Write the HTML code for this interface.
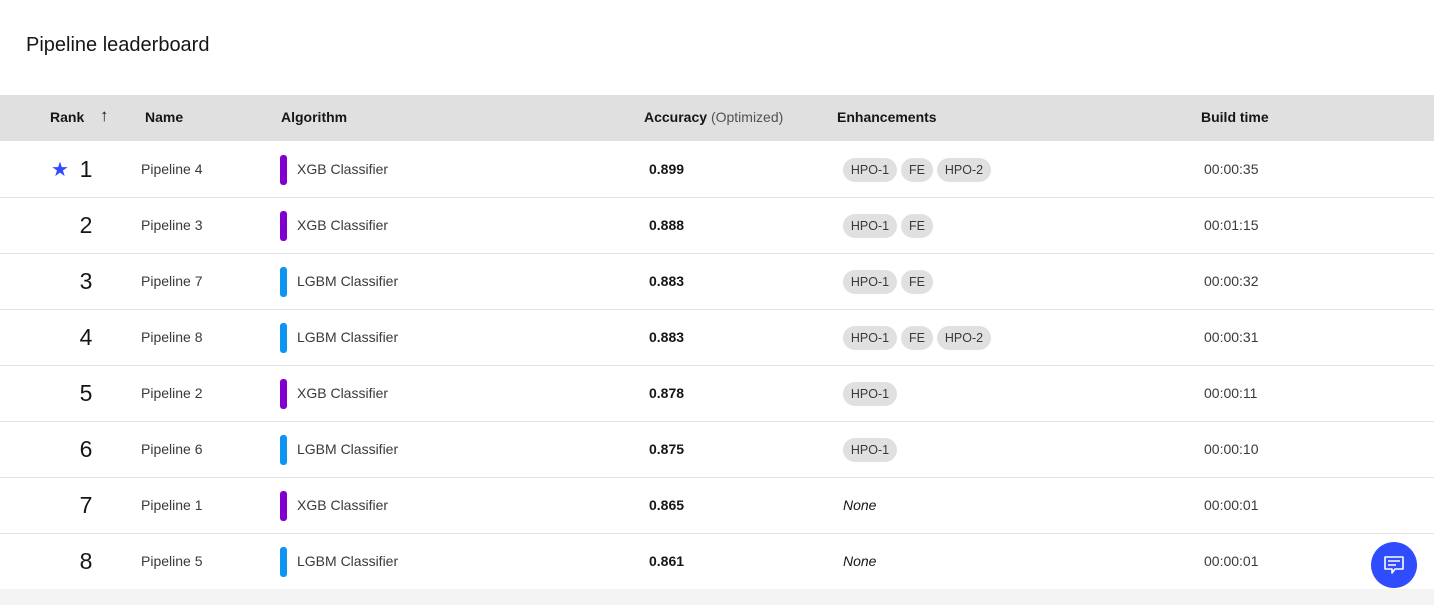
<!DOCTYPE html>
<html><head><style>
body{margin:0;width:1434px;height:605px;background:#fff;font-family:"Liberation Sans",sans-serif;color:#161616;position:relative;overflow:hidden}
.t{position:absolute;left:26px;top:34px;font-size:20px;color:#161616}
.hd{position:absolute;left:0;top:95px;width:1434px;height:46px;background:#e0e0e0;font-size:14px;font-weight:bold}
.hd span{position:absolute;top:14px}
.row{position:absolute;left:0;width:1434px;height:55px;border-bottom:1px solid #e0e0e0;font-size:14px}
.row>*{position:absolute}
.rk{left:78px;top:14px;font-size:23px;width:16px;text-align:center}
.nm{left:141px;top:19px;color:#393939}
.bar{left:280px;top:13px;width:7px;height:30px;border-radius:3px}
.al{left:297px;top:19px;color:#393939}
.ac{left:649px;top:19px;font-weight:bold}
.ch{top:16px;height:24px;line-height:24px;border-radius:12px;background:#e0e0e0;font-size:12.5px;color:#393939;text-align:center}
.no{left:843px;top:19px;font-style:italic}
.bt{left:1204px;top:19px;color:#393939}
.foot{position:absolute;left:0;top:589px;width:1434px;height:16px;background:#f4f4f4}
.fab{position:absolute;left:1371px;top:542px;width:46px;height:46px;border-radius:50%;background:#2f4cff}
</style></head><body>
<div class="t">Pipeline leaderboard</div>
<div class="hd"><span style="left:50px">Rank</span><span style="left:100px;top:11px;font-weight:normal;font-size:17px">↑</span><span style="left:145px">Name</span><span style="left:281px">Algorithm</span><span style="left:644px">Accuracy <span style="position:static;font-weight:normal;color:#525252">(Optimized)</span></span><span style="left:837px">Enhancements</span><span style="left:1201px">Build time</span></div>

<div class="row" style="top:142px"><span style="left:51px;top:15px;color:#2f4cff;font-size:20px">★</span><span class="rk">1</span><span class="nm">Pipeline 4</span><span class="bar" style="background:#8000d0"></span><span class="al">XGB Classifier</span><span class="ac">0.899</span><span class="ch" style="left:843px;width:54px">HPO-1</span><span class="ch" style="left:901px;width:32px">FE</span><span class="ch" style="left:937px;width:54px">HPO-2</span><span class="bt">00:00:35</span></div>
<div class="row" style="top:198px"><span class="rk">2</span><span class="nm">Pipeline 3</span><span class="bar" style="background:#8000d0"></span><span class="al">XGB Classifier</span><span class="ac">0.888</span><span class="ch" style="left:843px;width:54px">HPO-1</span><span class="ch" style="left:901px;width:32px">FE</span><span class="bt">00:01:15</span></div>
<div class="row" style="top:254px"><span class="rk">3</span><span class="nm">Pipeline 7</span><span class="bar" style="background:#0c94f0"></span><span class="al">LGBM Classifier</span><span class="ac">0.883</span><span class="ch" style="left:843px;width:54px">HPO-1</span><span class="ch" style="left:901px;width:32px">FE</span><span class="bt">00:00:32</span></div>
<div class="row" style="top:310px"><span class="rk">4</span><span class="nm">Pipeline 8</span><span class="bar" style="background:#0c94f0"></span><span class="al">LGBM Classifier</span><span class="ac">0.883</span><span class="ch" style="left:843px;width:54px">HPO-1</span><span class="ch" style="left:901px;width:32px">FE</span><span class="ch" style="left:937px;width:54px">HPO-2</span><span class="bt">00:00:31</span></div>
<div class="row" style="top:366px"><span class="rk">5</span><span class="nm">Pipeline 2</span><span class="bar" style="background:#8000d0"></span><span class="al">XGB Classifier</span><span class="ac">0.878</span><span class="ch" style="left:843px;width:54px">HPO-1</span><span class="bt">00:00:11</span></div>
<div class="row" style="top:422px"><span class="rk">6</span><span class="nm">Pipeline 6</span><span class="bar" style="background:#0c94f0"></span><span class="al">LGBM Classifier</span><span class="ac">0.875</span><span class="ch" style="left:843px;width:54px">HPO-1</span><span class="bt">00:00:10</span></div>
<div class="row" style="top:478px"><span class="rk">7</span><span class="nm">Pipeline 1</span><span class="bar" style="background:#8000d0"></span><span class="al">XGB Classifier</span><span class="ac">0.865</span><span class="no">None</span><span class="bt">00:00:01</span></div>
<div class="row" style="top:534px;border-bottom:none"><span class="rk">8</span><span class="nm">Pipeline 5</span><span class="bar" style="background:#0c94f0"></span><span class="al">LGBM Classifier</span><span class="ac">0.861</span><span class="no">None</span><span class="bt">00:00:01</span></div>
<div class="foot"></div>
<div class="fab"><svg width="46" height="46" viewBox="0 0 46 46"><path d="M14 15h18v12h-8l-3 4v-4h-7z" fill="none" stroke="#fff" stroke-width="1.6" stroke-linejoin="round"/><path d="M17 19h12M17 23h8" stroke="#fff" stroke-width="1.6"/></svg></div>
</body></html>
